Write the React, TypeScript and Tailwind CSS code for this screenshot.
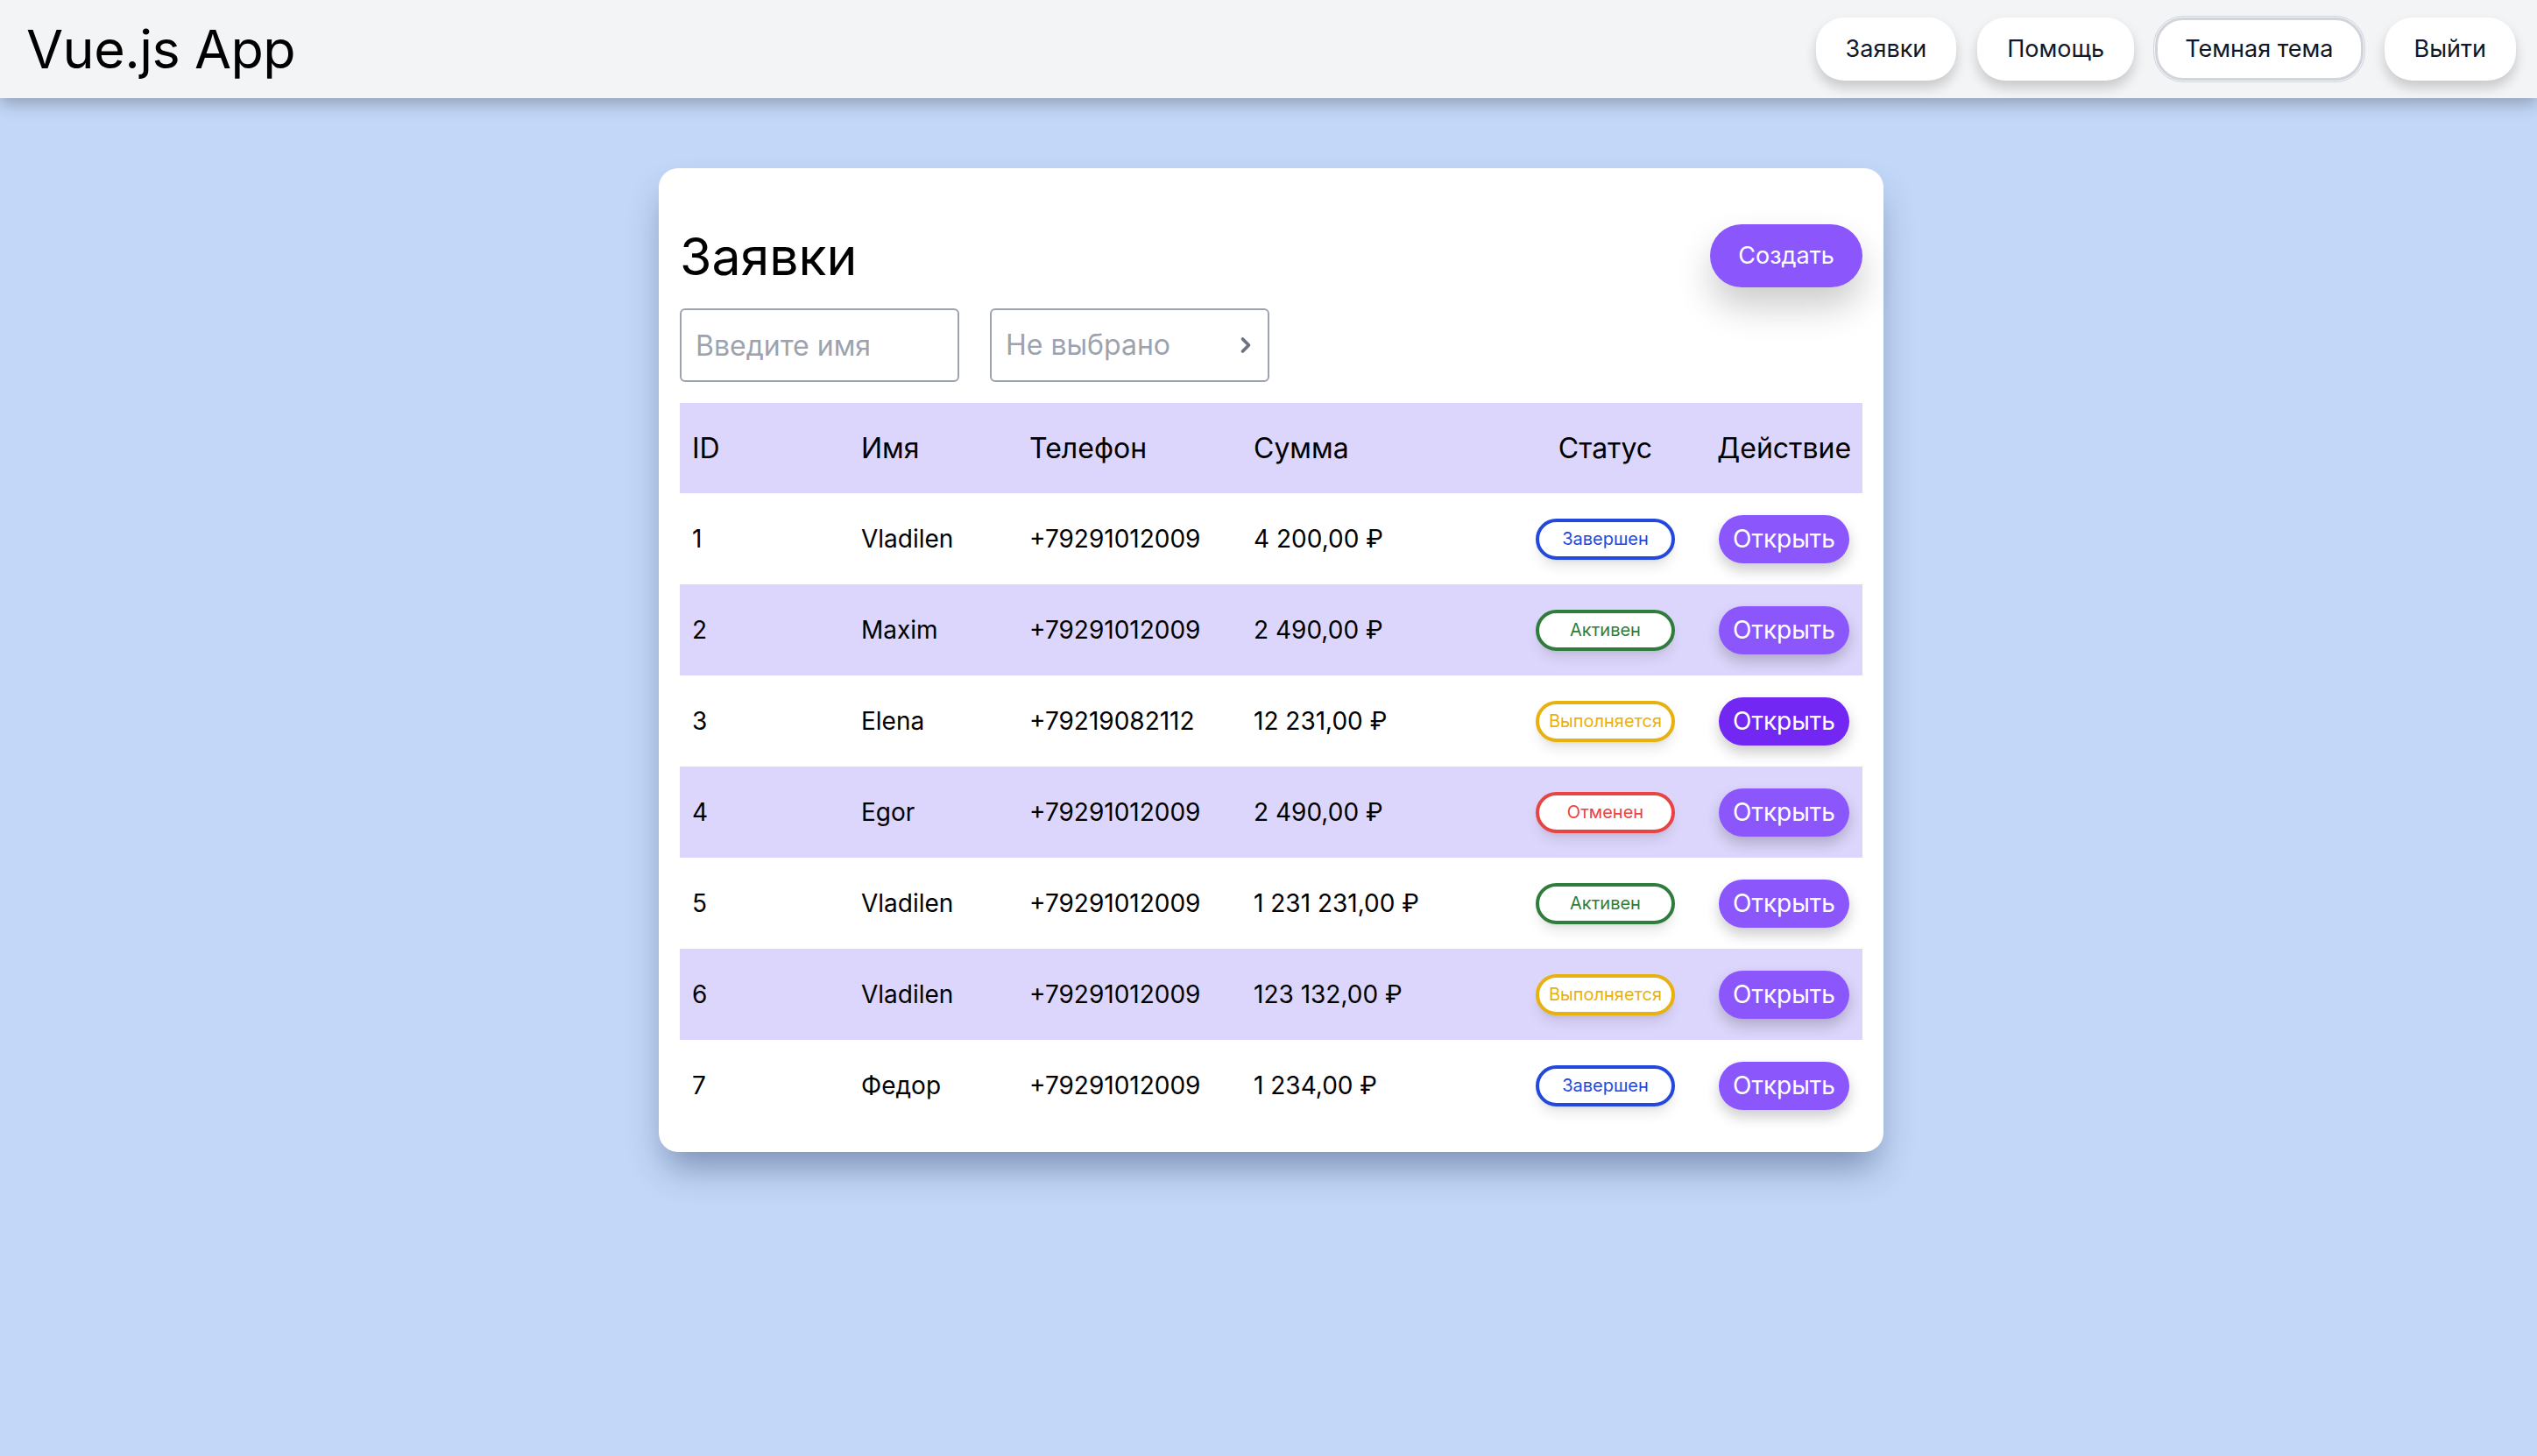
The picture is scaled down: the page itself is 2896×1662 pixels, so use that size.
import React from "react";
import { ChevronRight } from "lucide-react";

type Status = "done" | "active" | "pending" | "cancelled";

const rows: { id: number; name: string; phone: string; sum: string; status: Status; dark?: boolean }[] = [
  { id: 1, name: "Vladilen", phone: "+79291012009", sum: "4 200,00 ₽", status: "done" },
  { id: 2, name: "Maxim", phone: "+79291012009", sum: "2 490,00 ₽", status: "active" },
  { id: 3, name: "Elena", phone: "+79219082112", sum: "12 231,00 ₽", status: "pending", dark: true },
  { id: 4, name: "Egor", phone: "+79291012009", sum: "2 490,00 ₽", status: "cancelled" },
  { id: 5, name: "Vladilen", phone: "+79291012009", sum: "1 231 231,00 ₽", status: "active" },
  { id: 6, name: "Vladilen", phone: "+79291012009", sum: "123 132,00 ₽", status: "pending" },
  { id: 7, name: "Федор", phone: "+79291012009", sum: "1 234,00 ₽", status: "done" },
];

function Badge({ status }: { status: Status }) {
  if (status === "done")
    return (
      <span className="flex h-[47px] w-[159px] items-center justify-center rounded-full border-[4px] border-[#2348de] bg-white text-[20px] text-[#2348de] shadow-lg">
        Завершен
      </span>
    );
  if (status === "active")
    return (
      <span className="flex h-[47px] w-[159px] items-center justify-center rounded-full border-[4px] border-[#2f7d3b] bg-white text-[20px] text-[#2f7d3b] shadow-lg">
        Активен
      </span>
    );
  if (status === "pending")
    return (
      <span className="flex h-[47px] w-[159px] items-center justify-center rounded-full border-[4px] border-[#e9b10c] bg-white text-[20px] text-[#e9b10c] shadow-lg">
        Выполняется
      </span>
    );
  return (
    <span className="flex h-[47px] w-[159px] items-center justify-center rounded-full border-[4px] border-[#e94444] bg-white text-[20px] text-[#e94444] shadow-lg">
      Отменен
    </span>
  );
}

export default function App() {
  return (
    <div
      className="min-h-screen bg-[#c3d8f8] text-black"
      style={{ fontFamily: "Inter, 'Noto Sans', sans-serif" }}
    >
      <header className="relative z-10 flex h-[112px] items-center justify-between bg-[#f3f4f6] pl-[30px] pr-[24px] shadow-[0_6px_18px_rgba(0,0,0,0.28)]">
        <div className="text-[61px] leading-none tracking-[-0.5px] text-black">Vue.js App</div>
        <nav className="flex items-center gap-[24px]">
          <button className="h-[72px] rounded-[32px] bg-white px-[34px] text-[27px] text-[#111827] shadow-[0_8px_14px_rgba(0,0,0,0.18)]">
            Заявки
          </button>
          <button className="h-[72px] rounded-[32px] bg-white px-[34px] text-[27px] text-[#111827] shadow-[0_8px_14px_rgba(0,0,0,0.18)]">
            Помощь
          </button>
          <button className="h-[72px] rounded-[32px] border-[3px] border-[#d1d5db] bg-white px-[31px] text-[27px] text-[#111827] outline outline-1 outline-offset-[1px] outline-[#d1d5db]">
            Темная тема
          </button>
          <button className="h-[72px] rounded-[32px] bg-white px-[34px] text-[27px] text-[#111827] shadow-[0_8px_14px_rgba(0,0,0,0.18)]">
            Выйти
          </button>
        </nav>
      </header>

      <main className="flex justify-center pl-[6px] pt-[80px]">
        <section className="w-[1398px] rounded-[22px] bg-white px-[24px] pb-[24px] pt-[64px] shadow-[0_24px_40px_-8px_rgba(30,50,90,0.45)]">
          <div className="flex h-[72px] items-center justify-between">
            <h1 className="text-[59px] leading-none text-black">Заявки</h1>
            <button className="h-[72px] w-[174px] rounded-full bg-[#8b57fd] text-[27px] text-white shadow-[0_22px_40px_rgba(0,0,0,0.2)]">
              Создать
            </button>
          </div>

          <div className="mt-[24px] flex gap-[35px]">
            <input
              className="h-[84px] w-[319px] rounded-[6px] border-2 border-[#9ca3af] px-[16px] text-[32px] placeholder:text-[#9ca3af] outline-none"
              placeholder="Введите имя"
            />
            <div className="relative flex h-[84px] w-[319px] items-center rounded-[6px] border-2 border-[#9ca3af] px-[16px] text-[32px] text-[#9ca3af]">
              <span>Не выбрано</span>
              <ChevronRight
                className="absolute right-[11px] top-1/2 -translate-y-1/2 text-[#6b7280]"
                size={28}
                strokeWidth={3.2}
              />
            </div>
          </div>

          <div className="mt-[24px]">
            <div className="grid h-[103px] grid-cols-[193px_192px_256px_322px_187px_1fr] items-center bg-[#ddd6fc] text-[32px] text-black">
              <div className="pl-[14px]">ID</div>
              <div className="pl-[14px]">Имя</div>
              <div className="pl-[14px]">Телефон</div>
              <div className="pl-[14px]">Сумма</div>
              <div className="text-center">Статус</div>
              <div className="pl-[34px]">Действие</div>
            </div>
            {rows.map((r, i) => (
              <div
                key={r.id}
                className={
                  "grid h-[104px] grid-cols-[193px_192px_256px_322px_187px_1fr] items-center text-[28px] text-black " +
                  (i % 2 === 1 ? "bg-[#ddd6fc]" : "bg-white")
                }
              >
                <div className="pl-[14px]">{r.id}</div>
                <div className="pl-[14px]">{r.name}</div>
                <div className="pl-[14px]">{r.phone}</div>
                <div className="pl-[14px]">{r.sum}</div>
                <div className="flex justify-center">
                  <Badge status={r.status} />
                </div>
                <div className="pl-[36px]">
                  <button
                    className={
                      "h-[55px] w-[149px] rounded-full text-[28px] text-white shadow-[0_8px_16px_rgba(0,0,0,0.2)] " +
                      (r.dark ? "bg-[#7228f2]" : "bg-[#8b57fd]")
                    }
                  >
                    Открыть
                  </button>
                </div>
              </div>
            ))}
          </div>
        </section>
      </main>
    </div>
  );
}
